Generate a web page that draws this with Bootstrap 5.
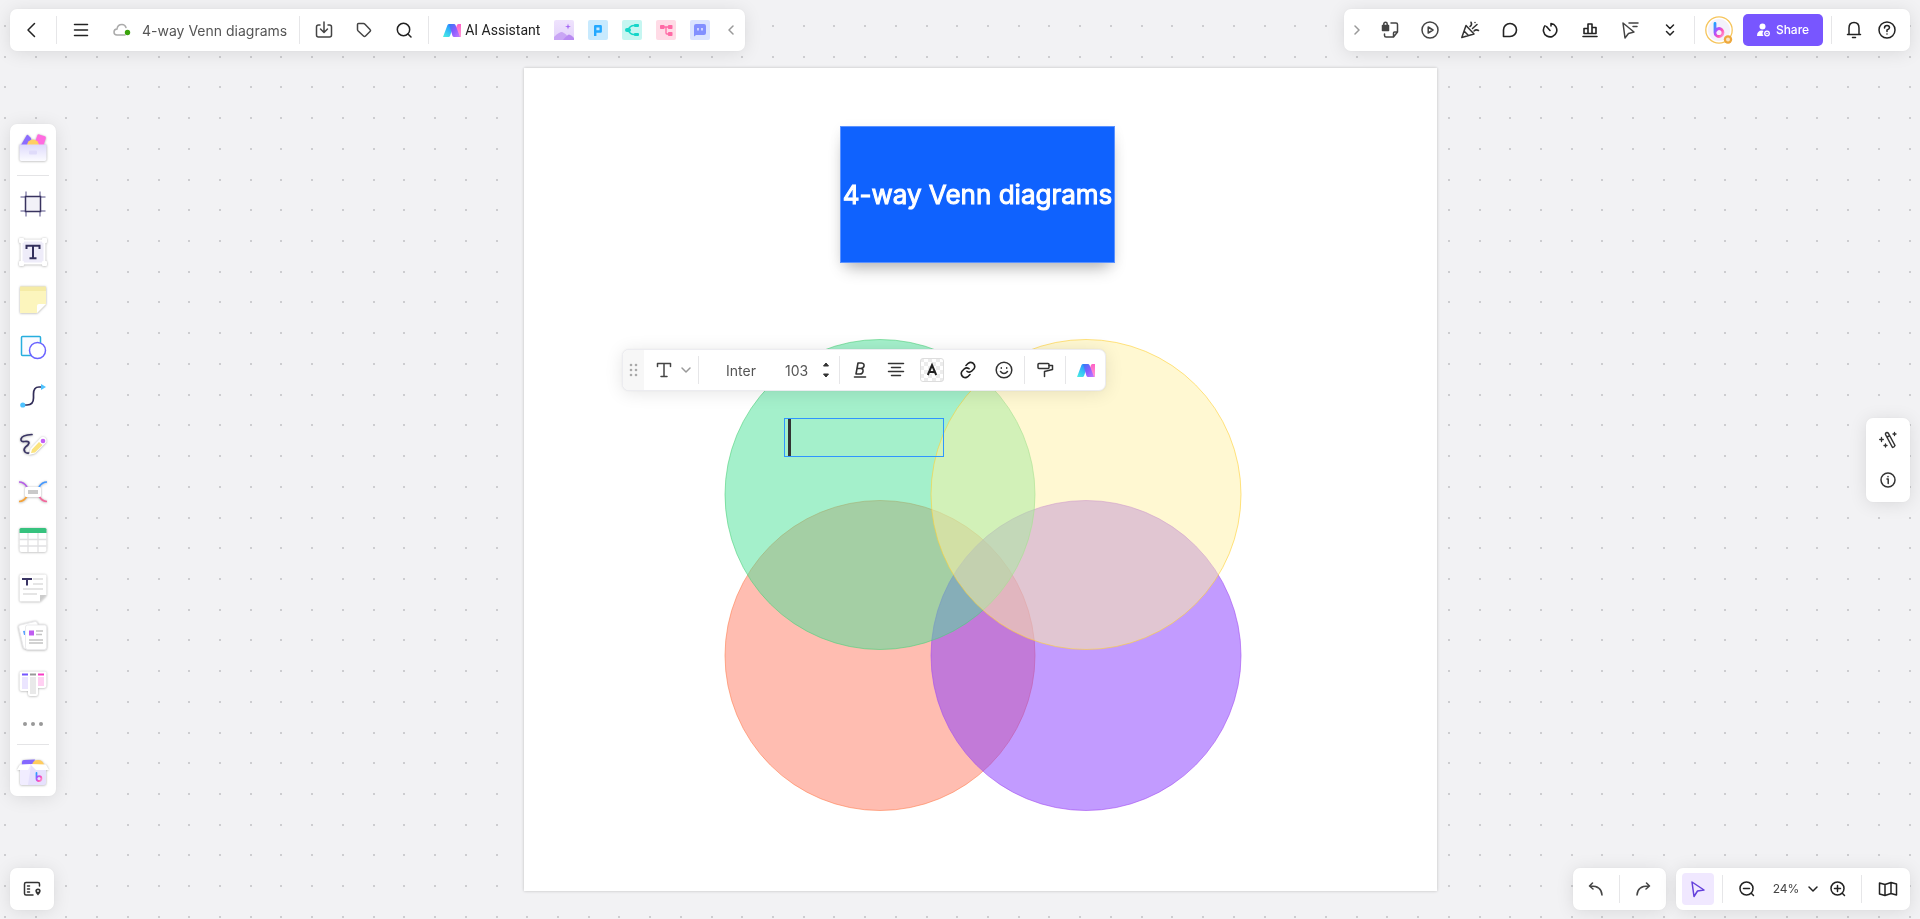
<!DOCTYPE html>
<html lang="en">
<head>
<meta charset="utf-8">
<meta name="viewport" content="width=device-width, initial-scale=1">
<title>4-way Venn diagrams</title>
<link href="https://cdn.jsdelivr.net/npm/bootstrap@5.3.0/dist/css/bootstrap.min.css" rel="stylesheet">
<style>
  body { font-family: Inter, "Liberation Sans", sans-serif; background: #f2f2f4; color: #222; }
  .dot-grid { top: 0; left: 0; }
  .overlay { padding: 9px 10px; pointer-events: none; }
  .middle { padding-top: 1px; }
  .panel { background: #fff; border-radius: 7px; box-shadow: 0 2px 18px rgba(0,0,0,.1), 0 0 2px rgba(0,0,0,.06); pointer-events: auto; }
  .bar { height: 42px; }
  .tool { display: flex; align-items: center; justify-content: center; padding: 0; border: 0; background: transparent; color: #222; flex: none; width: 40px; height: 40px; }
  .tool svg, .avatar svg { display: block; }
  .w22 { width: 22px; } .w26 { width: 26px; } .w28 { width: 28px; } .w30 { width: 30px; } .w32 { width: 32px; }
  .w34 { width: 34px; } .w36 { width: 36px; } .w42 { width: 42px; } .w44 { width: 44px; } .w46 { width: 46px; }
  .divider { width: 1px; height: 28px; background: #e6e6e8; flex: none; margin: 0 4px; }
  .divider-tight { margin: 0 2px; }
  .divider-none { margin: 0; }
  .divider-row { height: 1px; width: 32px; background: #e4e4e6; margin: 4px 7px; }
  .ln { fill: none; stroke: currentColor; stroke-width: 1.5; stroke-linecap: round; stroke-linejoin: round; }
  .doc-name { color: #555; font-size: 14px; font-weight: 400; padding: 0 8px 0 12px; gap: 11px; }
  .ai-btn { width: 114px; font-family: Roboto, sans-serif; font-size: 14px; padding-left: 10px; gap: 4px; }
  .collab { padding-right: 8px; }
  .share-btn { width: 80px; height: 32px; background: #7856ff; border: 0; border-radius: 5px; color: #fff; font-size: 12px; font-weight: 500; gap: 6px; }
  .side { width: 46px; }
  .side .tool { width: 46px; height: 48px; }
  .side .edge { height: 47px; }
  .side .more { height: 32px; }
  .side svg { overflow: visible; filter: drop-shadow(0 0 1px rgba(0,0,0,.22)) drop-shadow(0 1px 1px rgba(0,0,0,.12)); }
  .side .flat svg { filter: none; }
  .active-tool { background: #f0e8ff; border-radius: 4px; height: 32px; color: #6440dc; }
  .zoom-group { padding-left: 6px; }
  .zoom-level { width: 56px; font-size: 12px; color: #444; gap: 8px; padding-left: 2px; }
  .footer-groups { gap: 10px; }
  .helpers { padding: 2px 0; }
  .board { position: absolute; top: 68px; left: calc(50% - 436px); width: 913px; height: 823px; background: #fff; box-shadow: 0 0 3px rgba(0,0,0,.22); }
  .title-card { position: absolute; left: 316px; top: 58px; width: 275px; height: 137px; background: #0f62fe; border: 1px solid #5b92ff; color: #fff; font-size: 26px; font-weight: 400; -webkit-text-stroke: 1px #fff; box-shadow: 0 10px 16px -6px rgba(0,0,0,.3), 0 2px 12px rgba(0,0,0,.05); white-space: nowrap; }
  .venn { position: absolute; left: 0; top: 0; }
  .text-node { position: absolute; left: 260px; top: 350px; width: 160px; height: 39px; background: transparent; border: 1px solid #2f95ff; border-radius: 0; padding: 0 3px; }
  .caret { position: absolute; left: 264px; top: 351px; width: 3px; height: 37px; background: #333; }
  .format-bar { position: absolute; left: 98px; top: 281px; border: 1px solid #ececf0; overflow: hidden; padding-right: 1px; }
  .handle { background: #f7f7f7; height: 42px; width: 21px; }
  .text-style { width: 52px; gap: 8px; padding-left: 8px; }
  .font-pick, .font-size { border: 0; background: transparent; appearance: none; font-size: 14px; font-weight: 400; color: #555; }
  .font-pick { width: 76px; padding: 0 0 0 25px; }
  .font-size { width: 38px; padding: 0 0 0 8px; }
</style>
</head>
<body class="vh-100 overflow-hidden position-relative">

<svg width="0" height="0" class="position-absolute" aria-hidden="true">
  <defs>
    <linearGradient id="gCyan" x1="0" y1="1" x2=".6" y2="0"><stop offset="0" stop-color="#4df0e0"/><stop offset=".5" stop-color="#35c3f5"/><stop offset="1" stop-color="#2a8dff"/></linearGradient>
    <linearGradient id="gPurple" x1="0" y1="0" x2="1" y2="1"><stop offset="0" stop-color="#2f7cf5"/><stop offset=".5" stop-color="#8a5cff"/><stop offset="1" stop-color="#c47bff"/></linearGradient>
    <linearGradient id="gPink" x1="0" y1="0" x2="0" y2="1"><stop offset="0" stop-color="#ff5fc4"/><stop offset="1" stop-color="#ff9bd8"/></linearGradient>
    <linearGradient id="gB" x1="0" y1="0" x2="1" y2="1"><stop offset="0" stop-color="#1fa0ff"/><stop offset=".4" stop-color="#b64dff"/><stop offset=".7" stop-color="#ff4fb0"/><stop offset="1" stop-color="#ff9ad5"/></linearGradient>
    <linearGradient id="gBox" x1="0" y1="0" x2="0" y2="1"><stop offset="0" stop-color="#dedafc"/><stop offset="1" stop-color="#fbfbff"/></linearGradient>
    <linearGradient id="gPic" x1="0" y1="0" x2="0" y2="1"><stop offset="0" stop-color="#efe3fd"/><stop offset="1" stop-color="#e3d2fb"/></linearGradient>
    <symbol id="aiMark" viewBox="0 0 18 13">
      <path d="M0 13 4.500 1Q5 0 6 0H11L7 12Q6.500 13 5.500 13Z" fill="url(#gCyan)"/>
      <path d="M12.500 5 14 1Q14.500 0 15.500 0H18V13H16Z" fill="url(#gPink)"/>
      <path d="M6 0H11Q12 0 12.500 1L17 13H11Q10 13 9.500 12Z" fill="url(#gPurple)"/>
    </symbol>
    <symbol id="bMark" viewBox="0 0 12 16"><path d="M2 1.500V10.500A4 4 0 1 0 6 6.500Q4 6.500 2.500 9" fill="none" stroke="url(#gB)" stroke-width="2.800" stroke-linecap="round"/></symbol>
    <symbol id="chev" viewBox="0 0 12 12"><path d="M2 4 6 8 10 4" fill="none" stroke="currentColor" stroke-width="1.500" stroke-linecap="round" stroke-linejoin="round"/></symbol>
  </defs>
</svg>

<canvas class="dot-grid position-absolute" id="dots"></canvas>

<main class="board">
  <svg class="venn" width="913" height="823" viewBox="0 0 913 823" role="img" aria-label="Venn diagram with four circles">
    <g fill-opacity=".5" stroke-opacity=".6">
      <circle cx="356" cy="587.500" r="155" fill="#ff7b63" stroke="#ff7f50"/>
      <circle cx="562" cy="587.500" r="155" fill="#8537ff" stroke="#a24df0"/>
      <circle cx="356" cy="426.500" r="155" fill="#49e197" stroke="#4fd07c"/>
      <circle cx="562" cy="426.500" r="155" fill="#fff1a5" stroke="#ffd034"/>
    </g>
  </svg>
  <div class="title-card d-flex align-items-center justify-content-center">4-way Venn diagrams</div>
  <input class="text-node" type="text" aria-label="Text">
  <div class="caret"></div>

  <div class="format-bar panel bar d-flex align-items-center" role="toolbar" aria-label="Text format">
    <div class="handle d-flex align-items-center justify-content-center">
      <svg width="10" height="14" viewBox="0 0 10 14" fill="#aaa"><circle cx="2" cy="2" r="1.300"/><circle cx="7" cy="2" r="1.300"/><circle cx="2" cy="7" r="1.300"/><circle cx="7" cy="7" r="1.300"/><circle cx="2" cy="12" r="1.300"/><circle cx="7" cy="12" r="1.300"/></svg>
    </div>
    <button class="tool text-style" aria-label="Text style">
      <svg width="16" height="16" viewBox="0 0 16 16" class="ln" color="#444"><path d="M1.500 4.500V1.500H14.500V4.500M8 1.500V14.500M5 14.500H11"/></svg>
      <svg width="12" height="12" color="#999"><use href="#chev"/></svg>
    </button>
    <span class="divider divider-tight"></span>
    <select class="font-pick" aria-label="Font"><option>Inter</option></select>
    <input class="font-size" type="text" value="103" aria-label="Font size">
    <button class="tool w22" aria-label="Change size"><svg width="8" height="16" viewBox="0 0 8 16" fill="#333"><path d="M1.500 4 4 1 6.500 4ZM1.500 12 4 15 6.500 12Z" stroke="#333" stroke-linejoin="round"/></svg></button>
    <span class="divider divider-tight"></span>
    <button class="tool w36" aria-label="Bold"><svg width="14" height="16" viewBox="0 0 14 16" class="ln" color="#333"><path d="M5 1H8.500Q11.500 1.500 11 4 10.500 6.500 7.500 6.500H4L5 1ZM4 6.500H8Q10.500 7 10 9.500 9.500 12 7 12H3L4 6.500M1.500 15H12.500" stroke-width="1.600"/></svg></button>
    <button class="tool w36" aria-label="Align"><svg width="18" height="16" viewBox="0 0 18 16" class="ln" color="#333"><path d="M1.500 1.500H16.500M4.500 5.500H13.500M1.500 9.500H16.500M4.500 13.500H13.500"/></svg></button>
    <button class="tool w36" aria-label="Text colour"><svg width="24" height="24" viewBox="0 0 24 24"><defs><pattern id="chk" width="8" height="8" patternUnits="userSpaceOnUse"><rect width="4" height="4" fill="#ececec"/><rect x="4" y="4" width="4" height="4" fill="#ececec"/></pattern></defs><rect x=".5" y=".5" width="23" height="23" rx="2.500" fill="url(#chk)" stroke="#ddd"/><path d="M7.800 17 12 7 16.200 17M9.200 14H14.800" fill="none" stroke="#222" stroke-width="2"/></svg></button>
    <button class="tool w36" aria-label="Link"><svg width="18" height="18" viewBox="0 0 18 18" class="ln"><path d="M7 4.500 9.200 2.300Q11.500.5 13.800 2 17 4.500 15 7.800L12.600 10.200Q10.500 12 8 10.300M11 13.500 8.800 15.700Q6.500 17.500 4.200 16 1 13.500 3 10.200L5.400 7.800Q7.500 6 10 7.700" stroke-width="1.600"/></svg></button>
    <button class="tool w36" aria-label="Emoji"><svg width="18" height="18" viewBox="0 0 18 18" class="ln" color="#333"><circle cx="9" cy="9" r="7.800"/><path d="M5.500 10.500Q9 14.500 12.500 10.500M6.300 6.800V7.200M11.700 6.800V7.200"/></svg></button>
    <span class="divider divider-tight"></span>
    <button class="tool w36" aria-label="Format painter"><svg width="18" height="16" viewBox="0 0 18 16" class="ln" color="#333"><rect x="2" y="1.500" width="11" height="5" rx="1"/><path d="M13 3.500H16.500V7.500L8.500 9.500V14.500"/></svg></button>
    <span class="divider divider-tight"></span>
    <button class="tool w36" aria-label="AI"><svg width="18" height="13"><use href="#aiMark"/></svg></button>
  </div>
</main>

<div class="overlay position-absolute top-0 start-0 w-100 h-100 d-flex flex-column">
  <header class="d-flex justify-content-between">
    <nav class="panel bar d-flex align-items-center" aria-label="Document">
      <button class="tool w42" aria-label="Back"><svg width="10" height="16" viewBox="0 0 10 16" class="ln"><path d="M8.500 1.500 2 8 8.500 14.500"/></svg></button>
      <span class="divider"></span>
      <button class="tool" aria-label="Menu"><svg width="16" height="14" viewBox="0 0 16 14" class="ln"><path d="M1.500 1.500H14.500M1.500 7H14.500M1.500 12.500H14.500"/></svg></button>
      <a href="#" class="doc-name d-flex align-items-center text-decoration-none"><svg width="18" height="14" viewBox="0 0 18 14"><path d="M12 12H4Q1 12 1 9 1 6.300 4 6 4.500 1.500 9 1.500 12 1.500 13 4.500" fill="none" stroke="#aaa" stroke-width="1.500" stroke-linecap="round"/><circle cx="14.500" cy="9.500" r="2.700" fill="#3ba30c"/></svg><span>4-way Venn diagrams</span></a>
      <span class="divider"></span>
      <button class="tool" aria-label="Download"><svg width="18" height="18" viewBox="0 0 18 18" class="ln" color="#444"><path d="M5 4H3.500Q1.500 4 1.500 6V14Q1.500 16 3.500 16H14.500Q16.500 16 16.500 14V6Q16.500 4 14.500 4H13M9 1V11M5.500 8 9 11.500 12.500 8"/></svg></button>
      <button class="tool" aria-label="Tag"><svg width="16" height="16" viewBox="0 0 16 16" class="ln" color="#444"><path d="M1.500 2.500Q1.500 1.500 2.500 1.500L7.500 1.500Q8.300 1.500 9 2.200L14 7.500Q15 8.500 14 9.500L9.500 14Q8.500 15 7.500 14L2.200 9Q1.500 8.300 1.500 7.500Z"/></svg></button>
      <button class="tool" aria-label="Search"><svg width="16" height="16" viewBox="0 0 16 16" class="ln"><circle cx="7.500" cy="7.500" r="6.200"/><path d="M12 12 15 15"/></svg></button>
      <span class="divider"></span>
      <button class="tool ai-btn justify-content-start"><svg width="18" height="13"><use href="#aiMark"/></svg>AI Assistant</button>
      <button class="tool w34" aria-label="Image"><svg width="20" height="20" viewBox="0 0 20 20"><rect width="20" height="20" rx="2" fill="url(#gPic)"/><path d="M0 17Q5 12 8 12 12 13 16 20H0Z" fill="#c9a5f5"/><path d="M9 20Q13 15 15 14.500 18 15 20 18V20Z" fill="#b98af2"/><path d="M14 3.500 14.700 6 17 6.500 14.700 7.200 14 9.500 13.300 7.200 11 6.500 13.300 6Z" fill="#a566f5"/></svg></button>
      <button class="tool w34" aria-label="Presentation"><svg width="20" height="20" viewBox="0 0 20 20"><rect width="20" height="20" rx="2" fill="#c8eafe"/><path d="M7.200 16V6.200H12.700V11.500H7.200" fill="none" stroke="#22a8ff" stroke-width="2.400" stroke-linejoin="round"/></svg></button>
      <button class="tool w34" aria-label="Mind map"><svg width="20" height="20" viewBox="0 0 20 20"><rect width="20" height="20" rx="2" fill="#c5f6f1"/><path d="M6 10Q8 5.500 12 5.500H15M6 10Q8 14.500 12 14.500H15" fill="none" stroke="#14d6c8" stroke-width="1.600"/><rect x="3" y="8" width="6" height="4" rx="2" fill="#14d6c8"/><rect x="12" y="4" width="5" height="3" rx="1" fill="#14d6c8"/><rect x="12" y="13" width="5" height="3" rx="1" fill="#14d6c8"/></svg></button>
      <button class="tool w34" aria-label="Flowchart"><svg width="20" height="20" viewBox="0 0 20 20"><rect width="20" height="20" rx="2" fill="#ffdbe6"/><path d="M7 7H13M10 7V13Q10 14 11 14H13" fill="none" stroke="#ff6aa5" stroke-width="1.300"/><rect x="4" y="5" width="4.500" height="4" rx=".8" fill="#ff6aa5"/><rect x="12" y="5" width="4.500" height="4" rx=".8" fill="#ff6aa5"/><rect x="12" y="12" width="4.500" height="4" rx=".8" fill="#ff6aa5"/></svg></button>
      <button class="tool w34" aria-label="Chat"><svg width="20" height="20" viewBox="0 0 20 20"><rect width="20" height="20" rx="2" fill="#dbe4ff"/><path d="M6 4H14Q16 4 16 6V13Q16 15 14 15H6L4 16.500V6Q4 4 6 4Z" fill="#8290ff"/><path d="M8 8V10.500M12 8V10.500" stroke="#fff" stroke-width="1.200"/></svg></button>
      <button class="tool w28" aria-label="Collapse"><svg width="6" height="10" viewBox="0 0 6 10" class="ln" color="#999"><path d="M5 1 1 5 5 9"/></svg></button>
    </nav>

    <nav class="panel bar collab d-flex align-items-center" aria-label="Collaboration">
      <button class="tool w26" aria-label="Collapse"><svg width="6" height="10" viewBox="0 0 6 10" class="ln" color="#999"><path d="M1 1 5 5 1 9"/></svg></button>
      <button class="tool" aria-label="Lock"><svg width="18" height="18" viewBox="0 0 18 18" class="ln" color="#444"><path d="M10 2H15Q16.500 2 16.500 3.500V11L12.500 16H5Q3.500 16 3.500 14.500V13M16.500 11H13.500Q12.500 11 12.500 12V16"/><rect x="1.500" y="4.500" width="6" height="5" fill="#444"/><path d="M2.800 5V3Q2.800 1.300 4.500 1.300 6.200 1.300 6.200 3V5"/></svg></button>
      <button class="tool" aria-label="Present"><svg width="18" height="18" viewBox="0 0 18 18" class="ln" color="#444"><circle cx="9" cy="9" r="8"/><path d="M7.200 6 12 9 7.200 12Z"/></svg></button>
      <button class="tool" aria-label="Celebrate"><svg width="20" height="18" viewBox="0 0 20 18" class="ln" color="#333"><path d="M6 4.500 14 13 1.800 16.500ZM4 10 8.500 14.500M10 5.500Q12.500 4 11 1.200M12.500 7.500 17 3.500M14 10Q16 8 18.500 9.500M15 1.500V1.600"/></svg></button>
      <button class="tool" aria-label="Comment"><svg width="16" height="16" viewBox="0 0 16 16" class="ln"><path d="M1.500 14.500V8A6.500 6.500 0 1 1 8 14.500Z" stroke-width="1.600"/></svg></button>
      <button class="tool" aria-label="Timer"><svg width="16" height="16" viewBox="0 0 16 16" class="ln"><path d="M9 1.500A6.700 6.700 0 1 1 3 3.800M4.500 4.500 8 8.500M9 1.500V4" stroke-width="1.600"/></svg></button>
      <button class="tool" aria-label="Vote"><svg width="16" height="16" viewBox="0 0 16 16" class="ln"><path d="M1 14.500H15M2 11.500V6.500H6V11.500ZM6 11.500V2H10V11.500ZM10 5.500H14V11.500H10" stroke-width="1.600"/></svg></button>
      <button class="tool" aria-label="Follow"><svg width="18" height="18" viewBox="0 0 18 18" class="ln" color="#444"><path d="M2 2 4 17 7.500 12.500 13 11ZM8 2H17M12 5.500H16"/></svg></button>
      <button class="tool" aria-label="More tools"><svg width="10" height="14" viewBox="0 0 10 14" class="ln"><path d="M1.500 2 5 5.500 8.500 2M1.500 8.500 5 12 8.500 8.500"/></svg></button>
      <span class="divider"></span>
      <button class="tool avatar" aria-label="Account"><svg width="28" height="28" viewBox="0 0 28 28"><circle cx="14" cy="14" r="13.200" fill="#fff" stroke="#f6c55c" stroke-width="1.300"/><circle cx="14" cy="14" r="11" fill="#f3f1fb"/><use href="#bMark" x="8" y="6" width="12" height="16"/><circle cx="23" cy="23.500" r="4.200" fill="#eea83c"/><circle cx="23" cy="23.500" r="2" fill="#fff" fill-opacity=".7"/></svg></button>
      <button class="share-btn d-flex align-items-center justify-content-center p-0 mx-1"><svg width="13" height="14" viewBox="0 0 13 14" fill="#fff"><circle cx="5.500" cy="3.500" r="3"/><path d="M0 13Q0 7.500 5 7.500 6 7.500 6.500 8 4.500 10.500 6.500 13Z"/><circle cx="10" cy="10.500" r="2.300" fill="none" stroke="#fff" stroke-width="1.300"/><circle cx="10" cy="10.500" r=".8"/></svg>Share</button>
      <span class="divider"></span>
      <button class="tool w36" aria-label="Notifications"><svg width="16" height="18" viewBox="0 0 16 18" class="ln"><path d="M1.500 13.500H14.500M3 13.500V7Q3 1.500 8 1.500 13 1.500 13 7V13.500M6.500 16.500H9.500"/></svg></button>
      <button class="tool w30" aria-label="Help"><svg width="18" height="18" viewBox="0 0 18 18" class="ln"><circle cx="9" cy="9" r="8"/><path d="M6.500 7Q6.500 4.500 9 4.500 11.500 4.500 11.500 6.800 11.500 8 9 9V10.500M9 13V13.100"/></svg></button>
    </nav>
  </header>

  <div class="middle d-flex flex-grow-1 justify-content-between align-items-center">
    <aside class="side panel d-flex flex-column" aria-label="Tools">
      <button class="tool edge" aria-label="Resources"><svg width="28" height="28" viewBox="0 0 28 28"><path d="M2 11 7.500 1.500Q8 .5 9 1L12 4 13 11Z" fill="#8c6cff"/><rect x="17" y="1" width="9" height="10" rx="1.500" fill="#ff6be0" transform="rotate(18 21 6)"/><circle cx="14" cy="11.500" r="6" fill="#ffcf63"/><path d="M.5 10.500H27.500V25Q27.500 27 25.500 27H2.500Q.5 27 .5 25Z" fill="url(#gBox)"/><rect x="10" y="16.500" width="8" height="4" rx="1" fill="#dfdbfa"/></svg></button>
      <span class="divider-row"></span>
      <button class="tool flat" aria-label="Frame"><svg width="26" height="26" viewBox="0 0 26 26" fill="none"><path d="M6 .5V5M20 .5V5M6 21V25.500M20 21V25.500M.5 6H5M.5 20H5M21 6H25.500M21 20H25.500" stroke="#8f8bb0" stroke-width="1.500"/><rect x="5.500" y="5.500" width="15" height="15" fill="#f2f1f8" stroke="#38335f" stroke-width="1.500"/></svg></button>
      <button class="tool" aria-label="Text"><svg width="28" height="28" viewBox="0 0 28 28"><rect x="2.500" y="2.500" width="23" height="23" fill="#eeecf9" stroke="#fff" stroke-width="2"/><g fill="#fff"><rect width="5" height="5" rx="1"/><rect x="23" width="5" height="5" rx="1"/><rect y="23" width="5" height="5" rx="1"/><rect x="23" y="23" width="5" height="5" rx="1"/></g><path d="M7.500 11V7.800H20.500V11M14 7.800V20M10.500 20.200H17.500" fill="none" stroke="#332f5c" stroke-width="2"/></svg></button>
      <button class="tool" aria-label="Sticky note"><svg width="28" height="28" viewBox="0 0 28 28"><path d="M1 1H27V18L18 27H1Z" fill="#fcf5bd"/><path d="M1 .5H27V5H1Z" fill="#f5eba6"/><path d="M18 27V20Q18 18 20 18H27Z" fill="#fff"/></svg></button>
      <button class="tool flat" aria-label="Shapes"><svg width="26" height="26" viewBox="0 0 26 26"><rect x="1.500" y="1.500" width="19" height="19" rx="1" fill="#fafbff" stroke="#27aede" stroke-width="1.500"/><circle cx="17.500" cy="15.500" r="8" fill="#fff" stroke="#6a63ff" stroke-width="1.500"/></svg></button>
      <button class="tool flat" aria-label="Connector"><svg width="26" height="24" viewBox="0 0 26 24"><path d="M3 21H7Q13.500 21 13.500 14V10Q13.500 3 19 3H21" fill="none" stroke="#312d58" stroke-width="1.700"/><circle cx="2.800" cy="21" r="2.600" fill="#4fc3ff"/><path d="M21 0 26 3 21 6Z" fill="#4fc3ff"/></svg></button>
      <button class="tool" aria-label="Pen"><svg width="28" height="22" viewBox="0 0 28 22"><path d="M13 1.500Q3 2 2 6 1.500 9 5.500 8.500 10 8 10 10 9.500 12 6.500 14 4 16.500 6 19 7.500 20.500 10 20" fill="none" stroke="#3a3564" stroke-width="1.700" stroke-linecap="round"/><path d="M10 22 11.500 15.500 22 4.500Q24 3 26.500 5 28.500 7.500 27 9.500L16 20.500Z" fill="#fff"/><path d="M12 20 13 16.500 20 9 23.500 12 16 19.500Z" fill="#fbe37e"/><circle cx="24" cy="8" r="2.300" fill="#c45ff5"/></svg></button>
      <button class="tool" aria-label="Mind map"><svg width="28" height="22" viewBox="0 0 28 22" fill="none" stroke-width="1.700"><path d="M0 1Q5 1 8 6" stroke="#b65fe8"/><path d="M28 1Q23 1 20 6" stroke="#4297ff"/><path d="M0 20.500Q5 20.500 8 15" stroke="#f6a338"/><path d="M28 20.500Q23 20.500 20 15" stroke="#f2679c"/><rect x="6" y="6" width="16" height="10" rx="1.500" fill="#fff"/><rect x="9" y="9" width="10" height="4" fill="#c9c9c9"/></svg></button>
      <button class="tool" aria-label="Table"><svg width="28" height="24" viewBox="0 0 28 24"><path d="M.5 2H27.500V22Q27.500 24 25.500 24H2.500Q.5 24 .5 22Z" fill="#fff"/><path d="M.5 11.500H27.500M.5 18H27.500M9 5V24M19 5V24" stroke="#e0e0e2" stroke-width="1.300"/><path d="M.5 5V1.500Q.5 0 2 0H26Q27.500 0 27.500 1.500V5Z" fill="#36c27e"/></svg></button>
      <button class="tool" aria-label="Document"><svg width="28" height="28" viewBox="0 0 28 28"><path d="M2 .5H26Q27.500.5 27.500 2V21L21 27.500H2Q.5 27.500.5 26V2Q.5.5 2 .5Z" fill="#fff"/><path d="M21 27.500V21H27.500Z" fill="#ccc"/><path d="M4 6V5H12V6M8 5V11.500" fill="none" stroke="#3a3564" stroke-width="2"/><path d="M14 5H24M14 10H24M4 15H24M4 20H18" stroke="#ddd" stroke-width="1.500"/></svg></button>
      <button class="tool" aria-label="Cards"><svg width="28" height="28" viewBox="0 0 28 28"><rect x="2" y="1" width="19" height="24" rx="2" fill="#fff" stroke="#e8e8ea" transform="rotate(-13 11 14)"/><path d="M4 9 8 8.500V13H5Z" fill="#5aa2ff"/><rect x="6.500" y="3" width="21" height="24.500" rx="2" fill="#fff" stroke="#ebebed"/><rect x="10" y="8.500" width="5" height="5" fill="#bf5df0"/><path d="M17 9H24M17 12.500H23M10 18H24M10 21H24" stroke="#c4c4c4" stroke-width="1.300"/></svg></button>
      <button class="tool" aria-label="Kanban"><svg width="28" height="26" viewBox="0 0 28 26"><path d="M2 .5H26Q27.500.5 27.500 2V14Q27.500 17 25 17H19V23Q19 25 17 25H11Q9 25 9 23V20H2.500Q.5 20 .5 18V2Q.5.5 2 .5Z" fill="#fff"/><path d="M3 3.500H9" stroke="#7455ff" stroke-width="2"/><path d="M11 3.500H17" stroke="#999" stroke-width="2"/><path d="M19 3.500H25" stroke="#f83bc5" stroke-width="2"/><path d="M3 6H9V18H3Z" fill="#ebe5ff"/><path d="M11 6H17V23H11Z" fill="#e9e9e9"/><path d="M19 6H25V15H19Z" fill="#ffd0f2"/></svg></button>
      <button class="tool more flat" aria-label="More"><svg width="20" height="4" viewBox="0 0 20 4" fill="#999"><circle cx="2" cy="2" r="2"/><circle cx="10" cy="2" r="2"/><circle cx="18" cy="2" r="2"/></svg></button>
      <span class="divider-row"></span>
      <button class="tool edge" aria-label="Templates"><svg width="32" height="28" viewBox="0 0 32 28"><path d="M5 6V3Q5 1 7 1L18 .5 16 6Z" fill="#8468ff"/><path d="M15 6Q16 1 21 1 26 1 27 6Z" fill="#ffcc5e"/><path d="M3 6H29V24Q29 26 27 26H5Q3 26 3 24Z" fill="#e6e1fd"/><path d="M3 6H14L11 26H5Q3 26 3 24Z" fill="#f1edff"/><path d="M3 5.500 14 5 11 11H0Z" fill="#fff"/><path d="M13 5 29 5.500 32 11H19Z" fill="#fff"/><use href="#bMark" x="18" y="13" width="8" height="10"/></svg></button>
    </aside>

    <aside class="helpers panel w44 d-flex flex-column align-items-center" aria-label="Helpers">
      <button class="tool" aria-label="Magic wand"><svg width="18" height="18" viewBox="0 0 18 18" class="ln" color="#333"><path d="M6.500 2.500Q8 .5 9.500 2.500L16 14.500Q15 16.500 13.500 16.500L6.500 3.500M8 6 10.500 4.800"/><path d="M2.500 6.500V10.500M.7 8.500H4.300M15.500 1.500V4.500M14 3H17M6.500 13V16M5 14.500H8" stroke-width="1.300"/></svg></button>
      <button class="tool" aria-label="Info"><svg width="16" height="16" viewBox="0 0 16 16" class="ln" color="#333"><circle cx="8" cy="8" r="7"/><path d="M7 7H8.200V11.500M8 4.600V4.700"/></svg></button>
    </aside>
  </div>

  <footer class="d-flex justify-content-between">
    <div class="panel bar d-flex align-items-center"><button class="tool w44" aria-label="Outline"><svg width="18" height="16" viewBox="0 0 18 16" class="ln" color="#333"><path d="M16.500 5V3Q16.500 1.500 15 1.500H3Q1.500 1.500 1.500 3V12.500Q1.500 14 3 14H10M4.500 5H6.500M4.500 8H6.500M4.500 11H6.500"/><path d="M15 14.500Q12.300 11.800 12.300 10 12.300 7.500 15 7.500 17.700 7.500 17.700 10 17.700 11.800 15 14.500Z" fill="#333" stroke="none"/><circle cx="15" cy="10" r=".9" fill="#fff" stroke="none"/></svg></button></div>
    <div class="footer-groups d-flex">
      <div class="panel bar d-flex align-items-center">
        <button class="tool w46" aria-label="Undo"><svg width="16" height="14" viewBox="0 0 16 14" class="ln" color="#444"><path d="M4.500 1 1.500 4 5 7M1.500 4Q13.500 3.500 14 13"/></svg></button>
        <span class="divider divider-none"></span>
        <button class="tool w46" aria-label="Redo"><svg width="16" height="14" viewBox="0 0 16 14" class="ln" color="#444"><path d="M11.500 1 14.500 4 11 7M14.500 4Q2.500 3.500 2 13"/></svg></button>
      </div>
      <div class="panel bar zoom-group d-flex align-items-center">
        <button class="tool w32 active-tool me-1" aria-label="Select"><svg width="16" height="18" viewBox="0 0 16 18" class="ln"><path d="M2 2 4 16.500 7.500 11 14 10Z"/></svg></button>
        <span class="divider"></span>
        <button class="tool" aria-label="Zoom out"><svg width="16" height="16" viewBox="0 0 16 16" class="ln"><circle cx="7.500" cy="7.500" r="6.500"/><path d="M4.500 7.500H10.500M12.500 12.500 14.500 14.500"/></svg></button>
        <button class="tool zoom-level"><span>24%</span><svg width="12" height="12" color="#222"><use href="#chev"/></svg></button>
        <button class="tool w30 me-1" aria-label="Zoom in"><svg width="16" height="16" viewBox="0 0 16 16" class="ln"><circle cx="7.500" cy="7.500" r="6.500"/><path d="M4.500 7.500H10.500M7.500 4.500V10.500M12.500 12.500 14.500 14.500"/></svg></button>
        <span class="divider"></span>
        <button class="tool w44" aria-label="Map"><svg width="20" height="16" viewBox="0 0 20 16" class="ln"><path d="M1.500 2 7 3.500 13 1.500 18.500 3V14L13 12.500 7 14.500 1.500 13ZM7 3.500V14.500M13 1.500V12.500"/></svg></button>
      </div>
    </div>
  </footer>
</div>

<script src="https://cdn.jsdelivr.net/npm/bootstrap@5.3.0/dist/js/bootstrap.bundle.min.js"></script>
<script>
  // Draws the dot grid: one dot for every 128 canvas units at the current zoom.
  const dots = document.getElementById('dots');
  function drawDots() {
    dots.width = innerWidth;
    dots.height = innerHeight;
    const ctx = dots.getContext('2d'), step = 128 * 24 / 100;
    ctx.fillStyle = '#cdcdd0';
    for (let x = 4; x < dots.width; x += step)
      for (let y = 25; y < dots.height; y += step)
        ctx.fillRect(Math.round(x), Math.round(y), 2, 2);
  }
  addEventListener('resize', drawDots);
  drawDots();
</script>
</body>
</html>
